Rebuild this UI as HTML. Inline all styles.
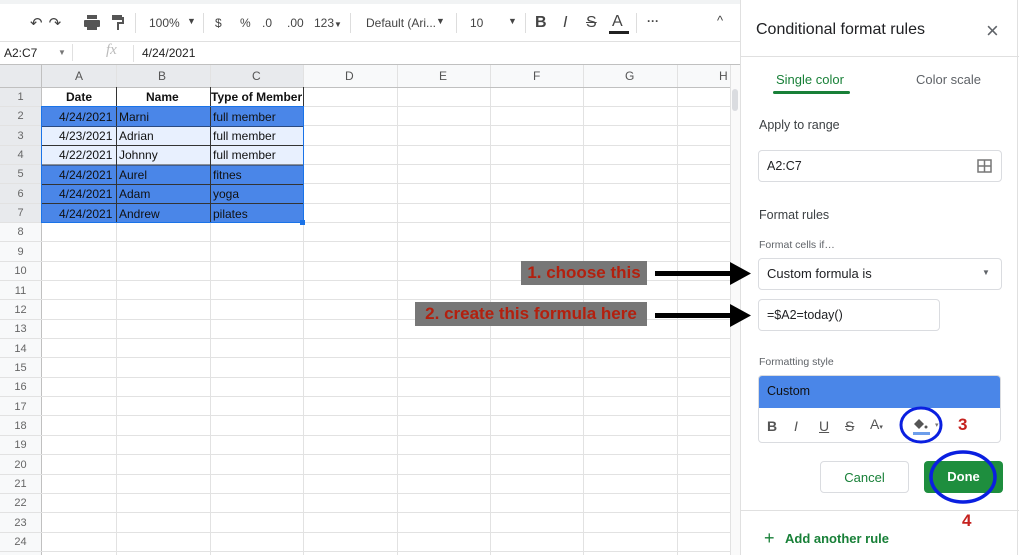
<!DOCTYPE html>
<html><head><meta charset="utf-8"><style>
*{margin:0;padding:0;box-sizing:border-box}
body{width:1024px;height:555px;overflow:hidden;background:#fff;font-family:"Liberation Sans",Arial,sans-serif;position:relative}
.a{position:absolute}
.tb{color:#444;font-size:12px}
.grid div{position:absolute}
.panel{position:absolute;left:740px;top:0;width:278px;height:555px;background:#fff;border-left:1px solid #e0e0e0;border-right:1px solid #e0e0e0}
.box{position:absolute;border:1px solid #dadce0;border-radius:4px;background:#fff}
.lbl{position:absolute;color:#3c4043}
</style></head><body>
<div class="a" style="left:0;top:0;width:740px;height:4px;background:#f1f3f4"></div>
<div class="a tb" style="top:14px;left:30px;font-size:15px;letter-spacing:6px">↶↷</div>
<svg class="a" style="left:84px;top:15px" width="16" height="15"><rect x="3" y="0" width="10" height="4" fill="#555"/><rect x="0" y="5" width="16" height="7" rx="1" fill="#555"/><rect x="3" y="10" width="10" height="5" fill="#555"/></svg>
<svg class="a" style="left:112px;top:15px" width="12" height="15"><rect x="0" y="0" width="10" height="5" fill="#555"/><rect x="10" y="2" width="2" height="5" fill="#555"/><rect x="5" y="7" width="7" height="2" fill="#555"/><rect x="5" y="7" width="2" height="8" fill="#555"/></svg>
<div class="a" style="left:135px;top:13px;width:1px;height:20px;background:#ddd"></div>
<div class="a tb" style="left:149px;top:16px">100%</div><div class="a tb" style="left:187px;top:16px;font-size:9px">▼</div>
<div class="a" style="left:203px;top:13px;width:1px;height:20px;background:#ddd"></div>
<div class="a tb" style="left:215px;top:16px">$</div><div class="a tb" style="left:240px;top:16px">%</div>
<div class="a tb" style="left:262px;top:16px">.0</div><div class="a tb" style="left:287px;top:16px">.00</div>
<div class="a tb" style="left:314px;top:16px">123<span style="font-size:8px">▼</span></div>
<div class="a" style="left:350px;top:13px;width:1px;height:20px;background:#ddd"></div>
<div class="a tb" style="left:366px;top:16px">Default (Ari...</div><div class="a tb" style="left:436px;top:16px;font-size:9px">▼</div>
<div class="a" style="left:456px;top:13px;width:1px;height:20px;background:#ddd"></div>
<div class="a tb" style="left:470px;top:16px">10</div><div class="a tb" style="left:508px;top:16px;font-size:9px">▼</div>
<div class="a" style="left:525px;top:13px;width:1px;height:20px;background:#ddd"></div>
<div class="a tb" style="left:535px;top:14px;font-size:16px;font-weight:bold">B</div>
<div class="a tb" style="left:563px;top:14px;font-size:16px;font-style:italic">I</div>
<div class="a tb" style="left:586px;top:14px;font-size:16px;text-decoration:line-through">S</div>
<div class="a tb" style="left:612px;top:13px;font-size:16px">A</div>
<div class="a" style="left:609px;top:31px;width:20px;height:3px;background:#222"></div>
<div class="a" style="left:636px;top:13px;width:1px;height:20px;background:#ddd"></div>
<div class="a tb" style="left:647px;top:14px;font-weight:bold">···</div>
<div class="a tb" style="left:717px;top:13px;font-size:13px">^</div>
<div class="a" style="left:0;top:41px;width:740px;height:1px;background:#e0e0e0"></div>
<div class="a" style="left:4px;top:46px;font-size:12px;color:#222">A2:C7</div>
<div class="a" style="left:58px;top:48px;font-size:8px;color:#777">▼</div>
<div class="a" style="left:72px;top:44px;width:1px;height:17px;background:#e0e0e0"></div>
<div class="a" style="left:106px;top:42px;font-size:15px;font-style:italic;color:#bbb;font-family:'Liberation Serif',serif">fx</div>
<div class="a" style="left:133px;top:45px;width:1px;height:17px;background:#e0e0e0"></div>
<div class="a" style="left:142px;top:46px;font-size:12px;color:#222">4/24/2021</div>
<div class="a" style="left:0;top:64px;width:740px;height:1px;background:#c0c0c0"></div>
<svg class="a" style="left:0;top:65px" width="740" height="490">
<rect x="0" y="0" width="730" height="22" fill="#f8f9fa"/>
<rect x="0" y="0" width="41" height="490" fill="#f8f9fa"/>
<rect x="41" y="0" width="262" height="22" fill="#e8eaed"/>
<rect x="0" y="22" width="41" height="135" fill="#e8eaed"/>
<rect x="0" y="0" width="41" height="22" fill="#e8eaed"/>
<rect x="730" y="0" width="10" height="490" fill="#fafafa"/>
<rect x="732" y="24" width="6" height="22" rx="3" fill="#dadce0"/>
<g stroke="#e2e2e2" stroke-width="1">
<line x1="116.5" y1="0" x2="116.5" y2="490"/><line x1="210.5" y1="0" x2="210.5" y2="490"/><line x1="303.5" y1="0" x2="303.5" y2="490"/><line x1="397.5" y1="0" x2="397.5" y2="490"/><line x1="490.5" y1="0" x2="490.5" y2="490"/><line x1="583.5" y1="0" x2="583.5" y2="490"/><line x1="677.5" y1="0" x2="677.5" y2="490"/><line x1="730.5" y1="0" x2="730.5" y2="490"/>
</g>
<line x1="41.5" y1="0" x2="41.5" y2="490" stroke="#c0c0c0"/>
<line x1="0" y1="22.5" x2="730" y2="22.5" stroke="#c0c0c0"/>
<g id="rows" stroke="#e2e2e2"></g>
<rect x="41" y="41" width="262" height="20" fill="#4a86e8"/>
<rect x="41" y="61" width="262" height="39" fill="#e8f0fe"/>
<rect x="41" y="100" width="262" height="58" fill="#4a86e8"/>
<g stroke="#333"><line x1="116.5" y1="22" x2="116.5" y2="158"/><line x1="210.5" y1="22" x2="210.5" y2="158"/><line x1="303.5" y1="22" x2="303.5" y2="41"/>
<line x1="41" y1="61.5" x2="303" y2="61.5" stroke="#2a4a80"/><line x1="41" y1="80.5" x2="303" y2="80.5"/><line x1="41" y1="100" x2="303" y2="100"/><line x1="41" y1="119.5" x2="303" y2="119.5"/><line x1="41" y1="138.5" x2="303" y2="138.5"/></g>
<rect x="41.5" y="41.5" width="262" height="116" fill="none" stroke="#1a73e8"/>
<rect x="300" y="155" width="5" height="5" fill="#1a73e8"/>
</svg>
<div class="grid" style="font-size:12px;color:#111">
<div style="top:69px;left:75px;color:#555">A</div><div style="top:69px;left:158px;color:#555">B</div><div style="top:69px;left:252px;color:#555">C</div><div style="top:69px;left:345px;color:#555">D</div><div style="top:69px;left:439px;color:#555">E</div><div style="top:69px;left:533px;color:#555">F</div><div style="top:69px;left:625px;color:#555">G</div><div style="top:69px;left:719px;color:#555">H</div>
<div style="top:90px;left:66px;font-weight:bold">Date</div><div style="top:90px;left:146px;font-weight:bold">Name</div><div style="top:90px;left:211px;font-weight:bold">Type of Member</div>
<div style="top:110px;left:59px">4/24/2021</div><div style="top:110px;left:119px">Marni</div><div style="top:110px;left:213px">full member</div>
<div style="top:129px;left:59px">4/23/2021</div><div style="top:129px;left:119px">Adrian</div><div style="top:129px;left:213px">full member</div>
<div style="top:148px;left:59px">4/22/2021</div><div style="top:148px;left:119px">Johnny</div><div style="top:148px;left:213px">full member</div>
<div style="top:168px;left:59px">4/24/2021</div><div style="top:168px;left:119px">Aurel</div><div style="top:168px;left:213px">fitnes</div>
<div style="top:187px;left:59px">4/24/2021</div><div style="top:187px;left:119px">Adam</div><div style="top:187px;left:213px">yoga</div>
<div style="top:207px;left:59px">4/24/2021</div><div style="top:207px;left:119px">Andrew</div><div style="top:207px;left:213px">pilates</div>
</div>
<div id="rn"></div>
<script>
var g=document.getElementById('rows'),rn=document.getElementById('rn'),s='',l='';
for(var i=1;i<=24;i++){var y=22+i*19.35;l+='<line x1="0" y1="'+(y|0)+'.5" x2="730" y2="'+(y|0)+'.5"/>';
s+='<div class="a" style="left:0;width:41px;text-align:center;font-size:11px;color:#666;top:'+(87+(i-1)*19.35+4)+'px">'+i+'</div>';}
g.innerHTML=l;rn.innerHTML=s;
</script>
<div class="a" style="left:521px;top:261px;width:126px;height:24px;background:#777;color:#b3200e;font-weight:bold;font-size:17px;line-height:24px;text-align:center">1. choose this</div>
<div class="a" style="left:415px;top:302px;width:232px;height:24px;background:#777;color:#b3200e;font-weight:bold;font-size:17px;line-height:24px;text-align:center">2. create this formula here</div>
<div class="panel">
<div class="lbl" style="left:15px;top:21px;font-size:16px;color:#202124">Conditional format rules</div>
<div class="lbl" style="left:245px;top:18px;font-size:22px;color:#5f6368;font-weight:300">×</div>
<div class="a" style="left:0;top:56px;width:278px;height:1px;background:#e0e0e0"></div>
<div class="lbl" style="left:35px;top:72px;font-size:13px;color:#188038">Single color</div>
<div class="a" style="left:32px;top:91px;width:77px;height:3px;background:#188038;border-radius:2px"></div>
<div class="lbl" style="left:175px;top:72px;font-size:13px;color:#5f6368">Color scale</div>
<div class="lbl" style="left:18px;top:118px;font-size:12.5px">Apply to range</div>
<div class="box" style="left:17px;top:150px;width:244px;height:32px"></div>
<div class="lbl" style="left:26px;top:159px;font-size:12.5px;color:#202124">A2:C7</div>
<svg class="a" style="left:236px;top:159px" width="15" height="14"><rect x="1" y="1" width="13" height="12" fill="none" stroke="#777" stroke-width="1.5"/><line x1="7.5" y1="1" x2="7.5" y2="13" stroke="#777" stroke-width="1.5"/><line x1="1" y1="7" x2="14" y2="7" stroke="#777" stroke-width="1.5"/></svg>
<div class="lbl" style="left:18px;top:208px;font-size:12.5px">Format rules</div>
<div class="lbl" style="left:18px;top:239px;font-size:10.5px;color:#5f6368">Format cells if…</div>
<div class="box" style="left:17px;top:258px;width:244px;height:32px"></div>
<div class="lbl" style="left:26px;top:266px;font-size:13px;color:#202124">Custom formula is</div>
<div class="lbl" style="left:241px;top:268px;font-size:8px;color:#5f6368">▼</div>
<div class="box" style="left:17px;top:299px;width:182px;height:32px"></div>
<div class="lbl" style="left:26px;top:308px;font-size:12.5px;color:#202124">=$A2=today()</div>
<div class="lbl" style="left:18px;top:356px;font-size:10.5px;color:#5f6368">Formatting style</div>
<div class="box" style="left:17px;top:375px;width:243px;height:68px;overflow:hidden"><div style="height:32px;background:#4a86e8;color:#111;font-size:12.5px;line-height:31px;padding-left:8px">Custom</div></div>
<div class="lbl" style="left:26px;top:418px;font-size:14px;font-weight:bold;color:#555">B</div>
<div class="lbl" style="left:53px;top:418px;font-size:14px;font-style:italic;color:#555">I</div>
<div class="lbl" style="left:78px;top:418px;font-size:14px;text-decoration:underline;color:#555">U</div>
<div class="lbl" style="left:104px;top:418px;font-size:14px;text-decoration:line-through;color:#555">S</div>
<div class="lbl" style="left:129px;top:416px;font-size:14px;color:#555">A<span style="font-size:7px">▾</span></div>
<svg class="a" style="left:170px;top:416px" width="24" height="20"><path d="M3 8 L8 3 L13 8 L8 13 Z" fill="#555"/><circle cx="15" cy="11" r="1.5" fill="#555"/><rect x="2" y="16" width="17" height="3" fill="#6d9eeb"/></svg>
<div class="lbl" style="left:194px;top:421px;font-size:7px;color:#777">▾</div>
<div class="lbl" style="left:217px;top:415px;font-size:17px;font-weight:bold;color:#c5221f">3</div>
<svg class="a" style="left:158px;top:405px" width="50" height="40"><ellipse cx="22" cy="20" rx="20" ry="17" fill="none" stroke="#0a1fe0" stroke-width="3"/></svg>
<div class="box" style="left:79px;top:461px;width:89px;height:32px;color:#188038;font-size:13px;text-align:center;line-height:31px">Cancel</div>
<div class="a" style="left:183px;top:461px;width:79px;height:32px;background:#1e8e3e;border-radius:4px;color:#fff;font-size:13px;font-weight:bold;text-align:center;line-height:32px">Done</div>
<svg class="a" style="left:186px;top:449px" width="72" height="56"><ellipse cx="36" cy="28" rx="32" ry="25" fill="none" stroke="#0a1fe0" stroke-width="3.5"/></svg>
<div class="lbl" style="left:221px;top:511px;font-size:17px;font-weight:bold;color:#c5221f">4</div>
<div class="a" style="left:0;top:510px;width:278px;height:1px;background:#e0e0e0"></div>
<div class="lbl" style="left:23px;top:528px;font-size:18px;color:#188038">+</div>
<div class="lbl" style="left:44px;top:531px;font-size:13px;font-weight:bold;color:#188038">Add another rule</div>
</div>
<svg class="a" style="left:650px;top:258px;z-index:5" width="110" height="75"><rect x="5" y="13" width="78" height="5" fill="#000"/><polygon points="80,4 101,15.5 80,27" fill="#000"/><rect x="5" y="55" width="78" height="5" fill="#000"/><polygon points="80,46 101,57.5 80,69" fill="#000"/></svg>
</body></html>
